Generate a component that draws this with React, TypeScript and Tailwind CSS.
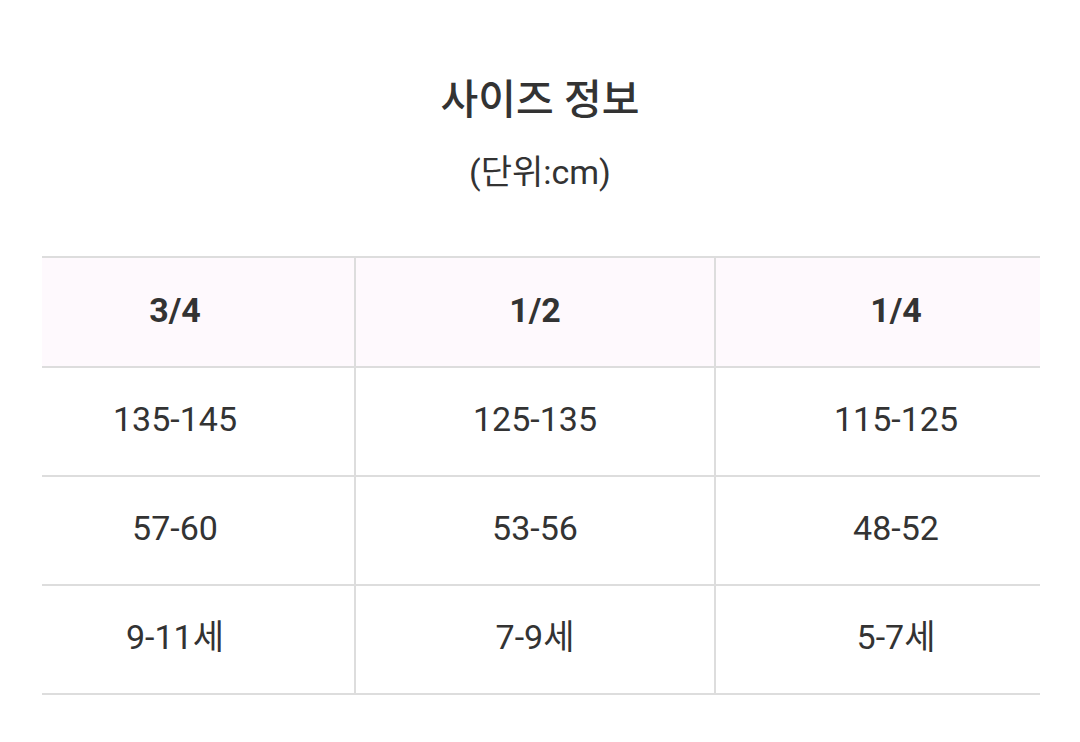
import React from 'react';

const headers = ['3/4', '1/2', '1/4'];
const rows = [
  ['135-145', '125-135', '115-125'],
  ['57-60', '53-56', '48-52'],
  ['9-11세', '7-9세', '5-7세'],
];

const font = { fontFamily: 'Roboto, "Noto Sans CJK KR", sans-serif' };

const App: React.FC = () => {
  return (
    <div className="min-h-[742px] w-[1080px] bg-white text-[#333]" style={font}>
      <div className="flex flex-col items-center pt-[76px]">
        <h1 className="text-[41px] font-medium leading-[48px]">사이즈 정보</h1>
        <p className="mt-[29px] text-[34px] leading-[38px]">(단위:cm)</p>
      </div>
      <div className="mt-[65px] pl-[42px] pr-[40px]">
        <div className="overflow-hidden">
          <div className="ml-[-46px] w-[1080px] border-t-2 border-[#dddddd]">
            <div className="grid grid-cols-3 bg-[#fef9fd]">
              {headers.map((h, i) => (
                <div
                  key={h}
                  className={`flex h-[110px] items-center justify-center border-b-2 border-[#dddddd] pb-[4px] text-[34px] font-bold ${i < 2 ? 'border-r-2' : ''}`}
                >
                  {h}
                </div>
              ))}
            </div>
            {rows.map((r, ri) => (
              <div key={ri} className="grid grid-cols-3">
                {r.map((c, i) => (
                  <div
                    key={i}
                    className={`flex h-[109px] items-center justify-center border-b-2 border-[#dddddd] pb-[4px] text-[34px] ${i < 2 ? 'border-r-2' : ''}`}
                  >
                    {c}
                  </div>
                ))}
              </div>
            ))}
          </div>
        </div>
      </div>
    </div>
  );
};

export default App;
